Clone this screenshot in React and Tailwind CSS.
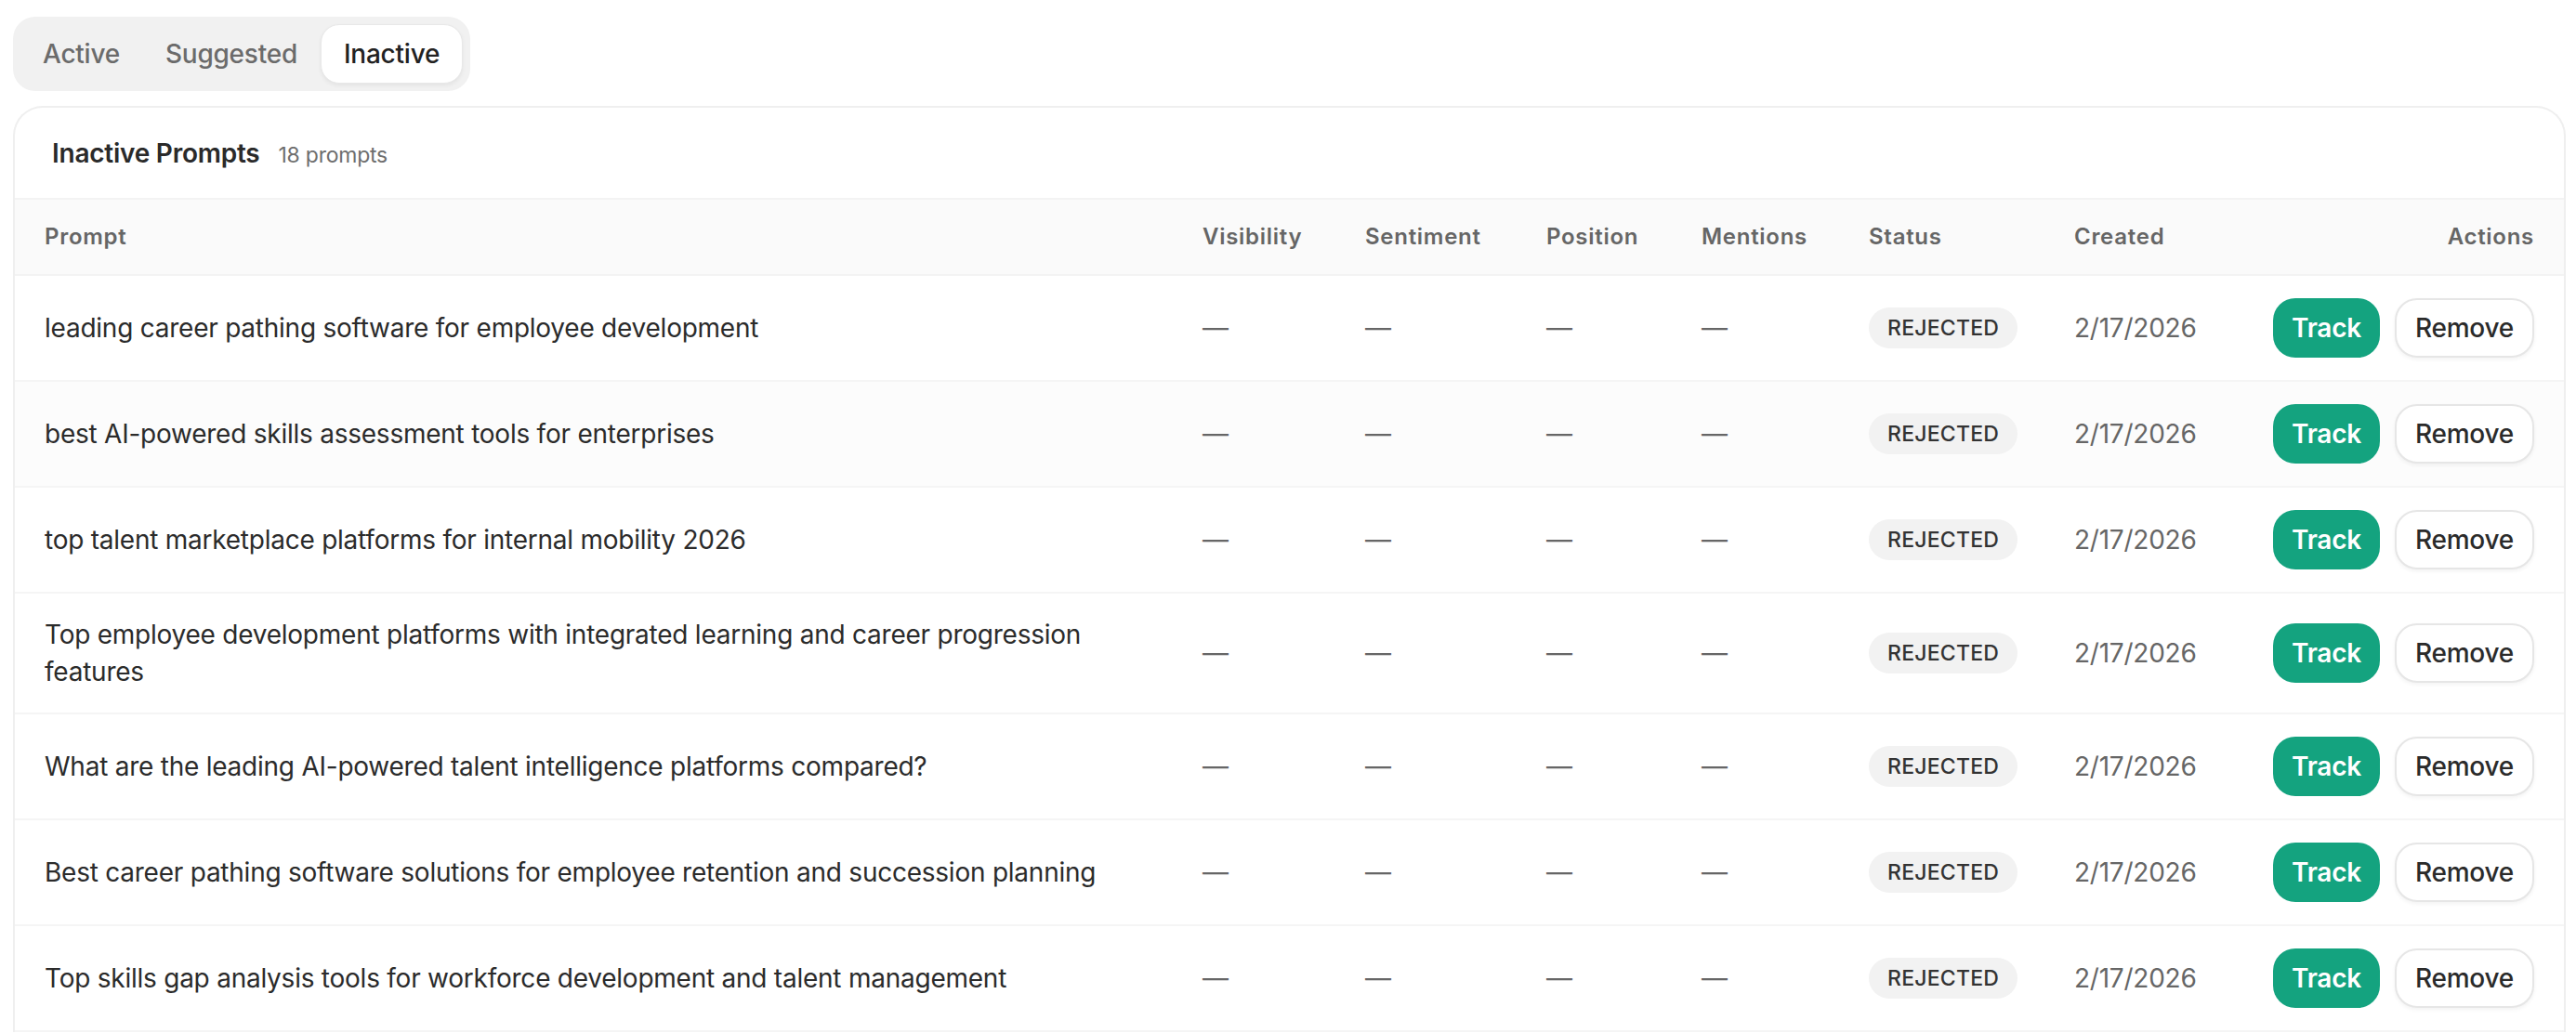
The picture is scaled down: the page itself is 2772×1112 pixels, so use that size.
const tabs = ['Active', 'Suggested', 'Inactive'];

const prompts = [
  'leading career pathing software for employee development',
  'best AI-powered skills assessment tools for enterprises',
  'top talent marketplace platforms for internal mobility 2026',
  'Top employee development platforms with integrated learning and career progression features',
  'What are the leading AI-powered talent intelligence platforms compared?',
  'Best career pathing software solutions for employee retention and succession planning',
  'Top skills gap analysis tools for workforce development and talent management'
];

const columns = ['Prompt', 'Visibility', 'Sentiment', 'Position', 'Mentions', 'Status', 'Created'];

const grid = 'grid grid-cols-[1246px_175px_195px_167px_180px_221px_210px_1fr]';

function Dash() {
  return <span className="text-[28px] leading-[40px] text-[#666]">—</span>;
}

export default function App() {
  return (
    <div className="h-screen overflow-hidden bg-white pl-[14px] pr-[11px] pt-[18px] font-['Inter',sans-serif] tracking-[-0.015em] text-[#2b2b2b]">
      <div className="inline-flex gap-[1px] rounded-[24px] bg-[#f1f1f1] p-2">
        {tabs.map((tab) => (
          <button
            key={tab}
            type="button"
            className={
              tab === 'Inactive'
                ? 'rounded-[20px] border border-[#e8e8e8] bg-white px-6 py-3 text-[28px] leading-[38px] font-medium text-[#222] shadow-[0_2px_4px_rgba(0,0,0,0.06)]'
                : 'rounded-[20px] px-6 py-3 text-[28px] leading-[40px] font-medium text-[#6b6b6b]'
            }
          >
            {tab}
          </button>
        ))}
      </div>

      <div className="mt-4 overflow-hidden rounded-t-[32px] border-2 border-b-0 border-[#efefef] bg-white">
        <div className="flex items-baseline gap-5 px-[40px] pt-[29px] pb-[28px]">
          <h2 className="text-[28px] leading-[40px] font-semibold text-[#2a2a2a]">Inactive Prompts</h2>
          <span className="text-[23px] text-[#6e6e6e]">18 prompts</span>
        </div>

        <div className={`${grid} border-y-2 border-[#f3f3f3] bg-[#fafafa]`}>
          {columns.map((col) => (
            <div key={col} className="px-8 py-6 text-[24px] leading-[32px] font-semibold tracking-[0.03em] text-[#666]">
              {col}
            </div>
          ))}
          <div className="px-8 py-6 text-right text-[24px] leading-[32px] font-semibold tracking-[0.03em] text-[#666]">
            Actions
          </div>
        </div>

        {prompts.map((prompt, i) => (
          <div
            key={prompt}
            className={`${grid} items-center border-b-2 border-[#f5f5f5] ${i === 1 ? 'bg-[#fcfcfc]' : 'bg-white'}`}
          >
            <div className="px-8 py-6 text-[28px] leading-[40px] text-[#2b2b2b]">{prompt}</div>
            <div className="px-8"><Dash /></div>
            <div className="px-8"><Dash /></div>
            <div className="px-8"><Dash /></div>
            <div className="px-8"><Dash /></div>
            <div className="px-8">
              <span className="inline-flex h-[44px] items-center rounded-full bg-[#f2f2f2] px-5 text-[23px] font-medium tracking-[0.01em] text-[#333]">
                REJECTED
              </span>
            </div>
            <div className="px-8 text-[28px] leading-[40px] text-[#666]">2/17/2026</div>
            <div className="flex items-center justify-end gap-4 px-8 py-6">
              <button
                type="button"
                className="h-[64px] rounded-[24px] bg-[#14a37f] px-5 text-[28px] font-semibold text-white"
              >
                Track
              </button>
              <button
                type="button"
                className="h-[64px] rounded-[24px] border-2 border-[#e6e6e6] bg-white px-[20px] text-[28px] font-medium text-[#2b2b2b] shadow-[0_2px_4px_rgba(0,0,0,0.05)]"
              >
                Remove
              </button>
            </div>
          </div>
        ))}
      </div>
    </div>
  );
}
